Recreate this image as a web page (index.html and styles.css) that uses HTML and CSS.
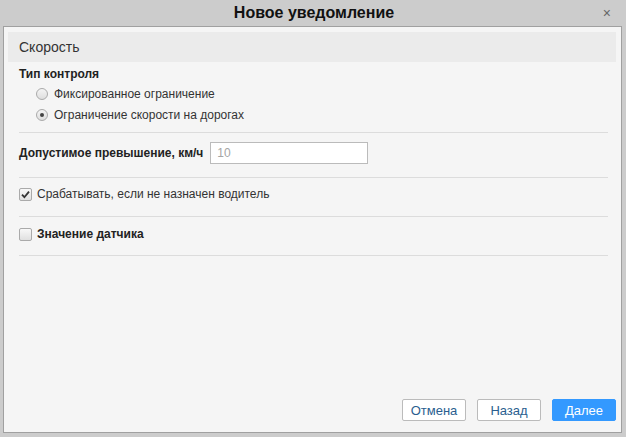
FILE: index.html
```html
<!DOCTYPE html>
<html lang="ru">
<head>
<meta charset="utf-8">
<link rel="stylesheet" href="styles.css">
</head>
<body>
<div class="dialog">
  <div class="titlebar">
    <span class="title">Новое уведомление</span>
    <span class="close">×</span>
  </div>
  <div class="panel">
    <div class="band">Скорость</div>
    <div class="content">
      <div class="section s1">
        <div class="caption">Тип контроля</div>
        <div class="radio-row"><span class="radio"></span><span>Фиксированное ограничение</span></div>
        <div class="radio-row"><span class="radio checked"></span><span>Ограничение скорости на дорогах</span></div>
      </div>
      <div class="section s2">
        <span class="caption">Допустимое превышение, км/ч</span>
        <input class="field" type="text" placeholder="10">
      </div>
      <div class="section s3">
        <span class="check checked"><svg width="9" height="9" viewBox="0 0 9 9"><path d="M1 4.6 L3.4 7.2 L8 1.6" fill="none" stroke="#333" stroke-width="1.8"/></svg></span>
        <span>Срабатывать, если не назначен водитель</span>
      </div>
      <div class="section s4">
        <span class="check"></span>
        <span class="caption">Значение датчика</span>
      </div>
    </div>
    <div class="footer">
      <button class="btn">Отмена</button>
      <button class="btn">Назад</button>
      <button class="btn primary">Далее</button>
    </div>
  </div>
</div>
</body>
</html>
```
FILE: styles.css
```css
html, body {
  margin: 0;
  padding: 0;
}
body {
  background: #cccccc;
  font-family: "Liberation Sans", Arial, sans-serif;
  color: #333;
  font-size: 12px;
}
.dialog {
  width: 626px;
  height: 437px;
  display: flex;
  flex-direction: column;
  box-sizing: border-box;
  padding: 0 4px 4px 3px;
}
.titlebar {
  height: 26px;
  position: relative;
  display: flex;
  align-items: center;
  justify-content: center;
}
.title {
  font-size: 16px;
  font-weight: bold;
  color: #111;
  margin-left: 3px;
}
.close {
  position: absolute;
  right: 11px;
  top: 5px;
  font-size: 14px;
  color: #666;
}
.panel {
  flex: 1;
  border: 1px solid #a0a0a0;
  background: #f5f5f5;
  padding: 5px 5px 11px 4px;
  display: flex;
  flex-direction: column;
}
.band {
  height: 30px;
  background: #ebebeb;
  font-size: 14px;
  color: #333;
  display: flex;
  align-items: center;
  padding-left: 11px;
}
.content {
  padding: 0 8px 0 11px;
}
.section {
  border-bottom: 1px solid #dcdcdc;
}
.caption {
  font-weight: bold;
  color: #222;
}
.s1 {
  padding: 4px 0 7px;
}
.s1 .caption {
  line-height: 17px;
  display: block;
}
.radio-row {
  height: 21px;
  display: flex;
  align-items: center;
  padding-left: 17px;
  gap: 6px;
}
.radio {
  width: 10px;
  height: 10px;
  border: 1px solid #aaa;
  border-radius: 50%;
  background: linear-gradient(#f4f4f4, #dedede);
  display: flex;
  align-items: center;
  justify-content: center;
}
.radio.checked::after {
  content: "";
  width: 4px;
  height: 4px;
  border-radius: 50%;
  background: #444;
}
.s2 {
  display: flex;
  align-items: center;
  gap: 7px;
  padding: 9px 0 13px;
}
.field {
  width: 158px;
  height: 22px;
  box-sizing: border-box;
  border: 1px solid #bbb;
  background: #fff;
  padding: 0 6px;
  font-family: inherit;
  font-size: 12px;
  outline: none;
}
.field::placeholder {
  color: #a5a5a5;
}
.s3, .s4 {
  display: flex;
  align-items: center;
  gap: 5px;
  height: 16px;
}
.s3 {
  padding: 8px 0 14px;
}
.s4 {
  padding: 9px 0 13px;
}
.check {
  width: 11px;
  height: 11px;
  border: 1px solid #aaa;
  border-radius: 2px;
  background: linear-gradient(#f8f8f8, #e0e0e0);
  display: flex;
  align-items: center;
  justify-content: center;
}
.footer {
  margin-top: auto;
  display: flex;
  justify-content: flex-end;
  gap: 11px;
}
.btn {
  width: 64px;
  height: 22px;
  border: 1px solid #bbb;
  border-radius: 2px;
  background: #fff;
  color: #2a5e8f;
  font-family: inherit;
  font-size: 13px;
  padding: 0;
}
.btn.primary {
  background: #3399ff;
  border-color: #3399ff;
  color: #fff;
}
```
